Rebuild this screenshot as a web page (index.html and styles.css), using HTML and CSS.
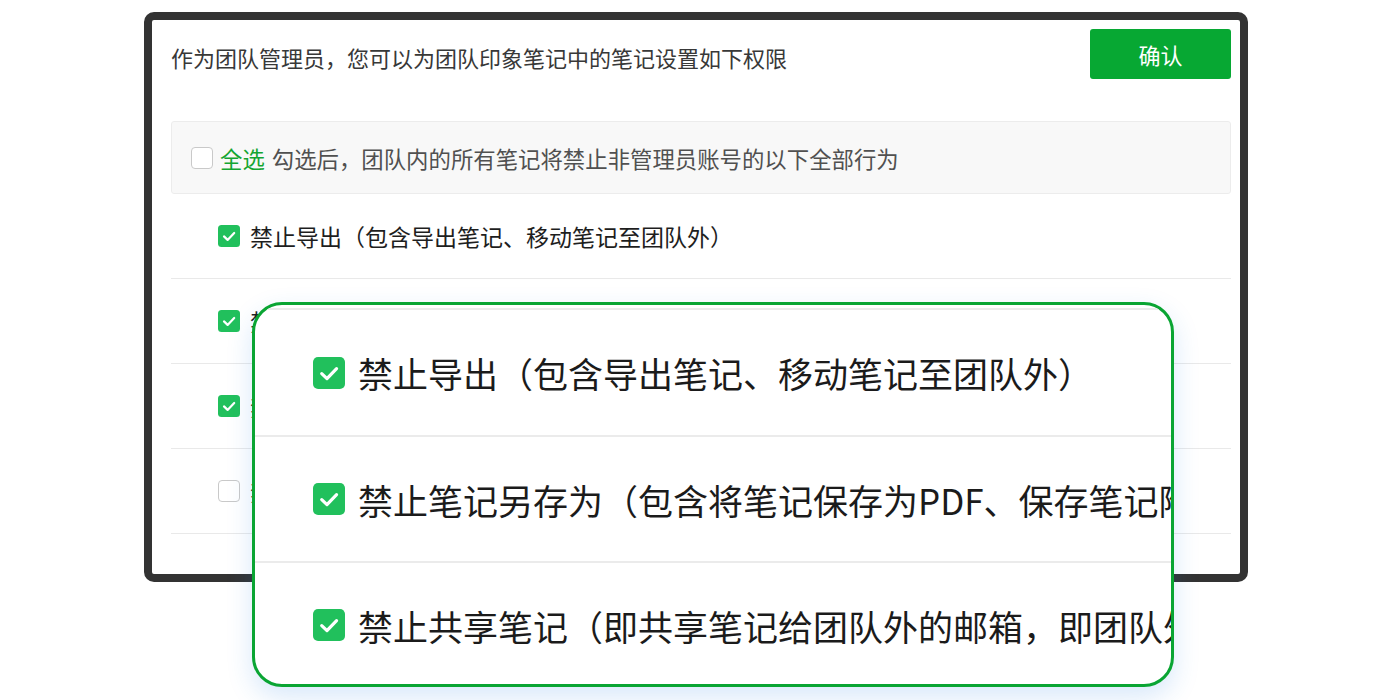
FILE: index.html
```html
<!DOCTYPE html>
<html lang="zh-CN">
<head>
<meta charset="UTF-8" />
<meta name="viewport" content="width=device-width, initial-scale=1" />
<title>团队笔记权限设置</title>
<link rel="stylesheet" href="styles.css">
</head>
<body>

<div class="stage">
  <div class="frame">
    <div class="head">
      <p class="intro">作为团队管理员，您可以为团队印象笔记中的笔记设置如下权限</p>
      <button class="confirm">确认</button>
    </div>

    <div class="select-all">
      <span class="box"></span>
      <span class="all">全选</span>
      <span class="hint">勾选后，团队内的所有笔记将禁止非管理员账号的以下全部行为</span>
    </div>

    <ul class="rules">
      <li>
        <svg class="check" viewBox="0 0 22 22"><rect width="22" height="22" rx="3.5" /><path d="M6 11.4l3.6 3.5L16.2 8" /></svg>
        禁止导出（包含导出笔记、移动笔记至团队外）
      </li>
      <li>
        <svg class="check" viewBox="0 0 22 22"><rect width="22" height="22" rx="3.5" /><path d="M6 11.4l3.6 3.5L16.2 8" /></svg>
        禁止笔记另存为（包含将笔记保存为PDF、保存笔记附件）
      </li>
      <li>
        <svg class="check" viewBox="0 0 22 22"><rect width="22" height="22" rx="3.5" /><path d="M6 11.4l3.6 3.5L16.2 8" /></svg>
        禁止共享笔记（即共享笔记给团队外的邮箱，即团队外部人员）
      </li>
      <li>
        <span class="box"></span>
        禁止打印笔记
      </li>
      <li></li>
    </ul>
  </div>

  <!-- zoomed detail over the list -->
  <div class="zoom-card">
    <div class="zoom-row">
      <svg class="check big" viewBox="0 0 22 22"><rect width="22" height="22" rx="3.5" /><path d="M6 11.4l3.6 3.5L16.2 8" /></svg>
      禁止导出（包含导出笔记、移动笔记至团队外）
    </div>
    <div class="zoom-row">
      <svg class="check big" viewBox="0 0 22 22"><rect width="22" height="22" rx="3.5" /><path d="M6 11.4l3.6 3.5L16.2 8" /></svg>
      禁止笔记另存为（包含将笔记保存为PDF、保存笔记附件）
    </div>
    <div class="zoom-row">
      <svg class="check big" viewBox="0 0 22 22"><rect width="22" height="22" rx="3.5" /><path d="M6 11.4l3.6 3.5L16.2 8" /></svg>
      禁止共享笔记（即共享笔记给团队外的邮箱，即团队外部人员）
    </div>
  </div>
</div>

</body>
</html>
```

FILE: styles.css
```css
body { margin: 0; background: #fff; font-family: "Noto Sans CJK SC", "Liberation Sans", sans-serif; }
.stage { position: relative; width: 1400px; height: 700px; overflow: hidden; }

.frame { box-sizing: border-box; width: 1104px; height: 570px; margin: 12px 0 0 144px; padding: 9px 9px 0 19px; border: 8px solid #333; border-radius: 10px; overflow: hidden; }
.head { display: flex; justify-content: space-between; align-items: center; height: 50px; }
.intro { margin: 0; padding-top: 6px; font-size: 22px; line-height: 30px; color: #383838; }
.confirm { width: 141px; height: 50px; border: none; border-radius: 3px; background: #07a833; color: #fff; font-family: inherit; font-size: 22px; cursor: pointer; }

.select-all { box-sizing: border-box; display: flex; align-items: center; height: 73px; margin-top: 42px; padding-left: 19px; border: 1px solid #ececec; border-radius: 3px; background: #f8f8f8; font-size: 22.4px; line-height: 30px; }
.box { box-sizing: border-box; flex: none; width: 22px; height: 22px; border: 1px solid #c9c9c9; border-radius: 4px; background: #fff; }
.select-all .box { margin-right: 7px; }
.all { color: #14a531; margin-right: 7px; }
.hint { color: #505050; }

.rules { list-style: none; margin: 0; padding: 0; }
.rules li { box-sizing: border-box; display: flex; align-items: center; gap: 10px; height: 85px; padding-left: 47px; border-bottom: 1px solid #e9e9e9; font-size: 23px; color: #1e1e1e; white-space: nowrap; }

.check { flex: none; width: 22px; height: 22px; }
.check rect { fill: #21c05c; }
.check path { fill: none; stroke: #fff; stroke-width: 2.2; stroke-linecap: round; stroke-linejoin: round; }
.check.big { width: 32px; height: 32px; }

.zoom-card { position: absolute; left: 252px; top: 302px; box-sizing: border-box; width: 922px; height: 385px; padding-top: 3px; border: 3px solid #0aa533; border-radius: 30px; background: #fff; overflow: hidden; box-shadow: 0 10px 26px rgba(40, 130, 230, 0.18); }
.zoom-row { box-sizing: border-box; display: flex; align-items: center; gap: 13px; height: 127px; padding-left: 58px; border-top: 2px solid #ebebeb; font-size: 35px; color: #1b1b1b; white-space: nowrap; }
.zoom-row + .zoom-row { height: 126px; }
```
